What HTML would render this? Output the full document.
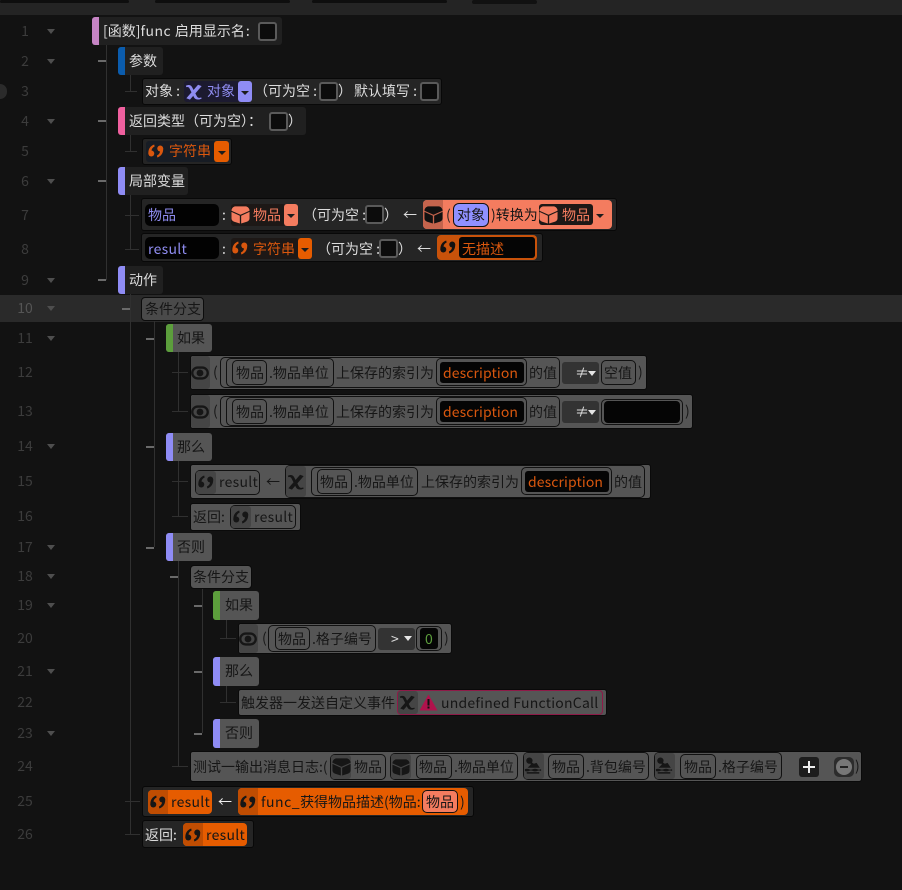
<!DOCTYPE html>
<html><head><meta charset="utf-8"><style>
html,body{margin:0;padding:0;background:#121212}
#p{position:relative;width:902px;height:890px;overflow:hidden;background:#121212;font-family:"Noto Sans CJK SC","Liberation Sans",sans-serif;font-size:14px;color:#dcdcdc}
.t{position:absolute;line-height:20px;white-space:nowrap}
.b{position:absolute;box-sizing:border-box;border-radius:3px}
.l{position:absolute;background:#303030}
.d{position:absolute;background:#6a6a6a;height:2px;width:8px}
.n{position:absolute;left:5px;width:40px;text-align:center;line-height:20px;color:#3c3c3c}
.a{position:absolute;left:47px;width:0;height:0;border-left:4px solid transparent;border-right:4px solid transparent;border-top:5px solid #4e4e4e}
.g{background:#555;border:1px solid #0a0a0a}
.k{background:#252525;border:1px solid #080808}
.o{border:1px solid #111;border-radius:5px}
.c{position:absolute;box-sizing:border-box;width:19px;height:19px;background:#0c0c0c;border:2px solid #5a5a5a;border-radius:3px}
.x{color:#161616}
.or{color:#d9570e}
.pu{color:#8f8cf0}
.co{color:#f47c5f}
.ls{letter-spacing:.3px}
.tr{position:absolute;width:0;height:0;border-left:4px solid transparent;border-right:4px solid transparent;border-top:4px solid #1c1c1c}
svg.i{position:absolute;width:18px;height:18px;fill:currentColor}
</style></head><body><div id="p">
<svg width="0" height="0" style="position:absolute"><defs>
<symbol id="q" viewBox="0 0 20 20"><circle cx="4.800" cy="12.800" r="3.300"/><path d="M1.500 12.800C1.400 8 3.300 4.500 8 2.800L8.500 5C6.300 6 5.200 7.800 5 9.500L2.500 14Z"/><circle cx="14.700" cy="7.200" r="3.300"/><path d="M18 7.200C18.100 12 16.200 15.500 11.500 17.200L11 15C13.200 14 14.300 12.200 14.500 10.500L17 6Z"/></symbol>
<symbol id="v" viewBox="0 0 20 20"><path d="M1 3C4 1.500 6.500 2 7.800 4.500L13 14.500C14 16.500 15.500 17 18 16L18.500 17.300C15 19 11.500 18.800 10 16L5 6C4.300 4.500 3 4.200 1.500 4.700Z"/><path d="M14.500 2L18.500 3.500L5.500 18.500L1.500 17Z"/></symbol>
<symbol id="u" viewBox="0 0 20 20"><path d="M4 1.500L16 1.500Q19.500 3 19.500 6L10 10.200L.5 6Q.5 3 4 1.500Z"/><path d="M.5 7.300L9.300 11.300L9.300 19.500L3 17.500Q.5 16.500 .5 14Z"/><path d="M19.500 7.300L10.700 11.300L10.700 19.500L17 17.500Q19.500 16.500 19.500 14Z"/></symbol>
<symbol id="e" viewBox="0 0 20 20"><rect x="1.400" y="4" width="17.200" height="12" rx="6" fill="none" stroke="currentColor" stroke-width="2.600"/><circle cx="10" cy="10" r="3.800"/></symbol>
<symbol id="h" viewBox="0 0 20 20"><circle cx="6" cy="4" r="3.500"/><path d="M7 5L11 7.500L14 6.500L17.500 12L4 12L7.500 8.500Z"/><path d="M1 13.500Q3.500 12.500 5.500 13.500T10 13.500T14.500 13.500T19 13.500L19 15.500Q16.500 14.500 14.500 15.500T10 15.500T5.500 15.500T1 15.500Z"/><path d="M3 16.800L17 16.800L17 18.500L3 18.500Z"/></symbol>
</defs></svg>

<!-- top bar -->
<div class="b" style="left:0;top:0;width:902px;height:15px;background:#242424;border-radius:0"></div>
<div class="b" style="left:0;top:0;width:129px;height:3px;background:#0e0e0e"></div>
<div class="b" style="left:155px;top:0;width:135px;height:3px;background:#0e0e0e"></div>
<div class="b" style="left:312px;top:0;width:135px;height:3px;background:#0e0e0e"></div>
<div class="b" style="left:472px;top:0;width:65px;height:4px;background:#111"></div>
<div class="b" style="left:0;top:295px;width:902px;height:27px;background:#2a2a2a;border-radius:0"></div>
<div class="b" style="left:-7px;top:84px;width:14px;height:15px;background:#2b2b2b;border-radius:8px"></div>

<!-- gutter -->
<div class="n" style="top:21px">1</div><div class="a" style="top:29px"></div>
<div class="n" style="top:51px">2</div><div class="a" style="top:59px"></div>
<div class="n" style="top:81px">3</div>
<div class="n" style="top:111px">4</div><div class="a" style="top:119px"></div>
<div class="n" style="top:141px">5</div>
<div class="n" style="top:171px">6</div><div class="a" style="top:179px"></div>
<div class="n" style="top:205px">7</div>
<div class="n" style="top:239px">8</div>
<div class="n" style="top:270px">9</div><div class="a" style="top:278px"></div>
<div class="n" style="top:298px;color:#555">10</div><div class="a" style="top:306px"></div>
<div class="n" style="top:328px">11</div><div class="a" style="top:336px"></div>
<div class="n" style="top:362px">12</div>
<div class="n" style="top:401px">13</div>
<div class="n" style="top:436px">14</div><div class="a" style="top:444px"></div>
<div class="n" style="top:471px">15</div>
<div class="n" style="top:506px">16</div>
<div class="n" style="top:537px">17</div><div class="a" style="top:545px"></div>
<div class="n" style="top:566px">18</div><div class="a" style="top:574px"></div>
<div class="n" style="top:595px">19</div><div class="a" style="top:603px"></div>
<div class="n" style="top:628px">20</div>
<div class="n" style="top:661px">21</div><div class="a" style="top:669px"></div>
<div class="n" style="top:692px">22</div>
<div class="n" style="top:723px">23</div><div class="a" style="top:731px"></div>
<div class="n" style="top:756px">24</div>
<div class="n" style="top:791px">25</div>
<div class="n" style="top:824px">26</div>

<!-- tree lines -->
<div class="l" style="left:106px;top:45px;width:1px;height:235px"></div>
<div class="l" style="left:130px;top:294px;width:1px;height:540px"></div>
<div class="l" style="left:154px;top:321px;width:1px;height:226px"></div>
<div class="l" style="left:178px;top:561px;width:1px;height:205px"></div>
<div class="l" style="left:202px;top:588px;width:1px;height:145px"></div>
<div class="l" style="left:130px;top:75px;width:1px;height:17px"></div>
<div class="l" style="left:125px;top:91px;width:12px;height:1px"></div>
<div class="l" style="left:130px;top:135px;width:1px;height:17px"></div>
<div class="l" style="left:125px;top:151px;width:12px;height:1px"></div>
<div class="l" style="left:130px;top:195px;width:1px;height:54px"></div>
<div class="l" style="left:125px;top:215px;width:14px;height:1px"></div>
<div class="l" style="left:125px;top:249px;width:14px;height:1px"></div>
<div class="l" style="left:178px;top:352px;width:1px;height:60px"></div>
<div class="l" style="left:172px;top:372px;width:16px;height:1px"></div>
<div class="l" style="left:172px;top:411px;width:16px;height:1px"></div>
<div class="l" style="left:178px;top:461px;width:1px;height:55px"></div>
<div class="l" style="left:172px;top:481px;width:16px;height:1px"></div>
<div class="l" style="left:172px;top:516px;width:16px;height:1px"></div>
<div class="l" style="left:226px;top:620px;width:1px;height:18px"></div>
<div class="l" style="left:220px;top:638px;width:16px;height:1px"></div>
<div class="l" style="left:226px;top:686px;width:1px;height:16px"></div>
<div class="l" style="left:220px;top:702px;width:16px;height:1px"></div>
<div class="l" style="left:172px;top:766px;width:16px;height:1px"></div>
<div class="l" style="left:125px;top:801px;width:15px;height:1px"></div>
<div class="l" style="left:125px;top:834px;width:15px;height:1px"></div>
<div class="d" style="left:98px;top:60px"></div>
<div class="d" style="left:98px;top:120px"></div>
<div class="d" style="left:98px;top:180px"></div>
<div class="d" style="left:98px;top:279px"></div>
<div class="d" style="left:122px;top:308px"></div>
<div class="d" style="left:146px;top:338px"></div>
<div class="d" style="left:146px;top:446px"></div>
<div class="d" style="left:146px;top:547px"></div>
<div class="d" style="left:170px;top:576px"></div>
<div class="d" style="left:194px;top:605px"></div>
<div class="d" style="left:194px;top:671px"></div>
<div class="d" style="left:194px;top:733px"></div>

<!-- row 1 -->
<div class="b" style="left:92px;top:17px;width:190px;height:28px;background:#202020"></div>
<div class="b" style="left:92px;top:17px;width:7px;height:28px;background:#c684c4;border-radius:3px 0 0 3px"></div>
<span class="t" style="left:103px;top:21px">[函数]<span style="letter-spacing:.5px">func </span>启用显示名<span style="margin-left:1px">:</span></span>
<div class="c" style="left:258px;top:22px"></div>

<!-- row 2 -->
<div class="b" style="left:118px;top:47px;width:45px;height:28px;background:#202020"></div>
<div class="b" style="left:118px;top:47px;width:7px;height:28px;background:#0b5cad;border-radius:3px 0 0 3px"></div>
<span class="t" style="left:129px;top:51px">参数</span>

<!-- row 3 -->
<div class="b k" style="left:142px;top:78px;width:300px;height:27px"></div>
<span class="t" style="left:145px;top:81px">对象 :</span>
<div class="b" style="left:184px;top:81px;width:56px;height:21px;background:#1c1a30"></div>
<svg class="i pu" style="left:185px;top:83px"><use href="#v"/></svg>
<span class="t pu" style="left:207px;top:81px">对象</span>
<div class="b" style="left:238px;top:81px;width:14px;height:21px;background:#8f8cf5"></div>
<div class="tr" style="left:241px;top:91px"></div>
<span class="t" style="left:254px;top:81px">（可为空 :</span>
<div class="c" style="left:319px;top:82px"></div>
<span class="t" style="left:338px;top:81px">）</span>
<span class="t" style="left:354px;top:81px">默认填写 :</span>
<div class="c" style="left:420px;top:82px"></div>

<!-- row 4 -->
<div class="b" style="left:118px;top:107px;width:188px;height:28px;background:#202020"></div>
<div class="b" style="left:118px;top:107px;width:7px;height:28px;background:#f0609f;border-radius:3px 0 0 3px"></div>
<span class="t" style="left:129px;top:111px">返回类型（可为空）：</span>
<div class="c" style="left:269px;top:112px"></div>
<span class="t" style="left:288px;top:111px">）</span>

<!-- row 5 -->
<div class="b k" style="left:142px;top:138px;width:90px;height:27px"></div>
<div class="b" style="left:146px;top:141px;width:70px;height:21px;background:#171c24"></div>
<svg class="i or" style="left:147px;top:142px"><use href="#q"/></svg>
<span class="t or" style="left:169px;top:141px">字符串</span>
<div class="b" style="left:214px;top:141px;width:15px;height:21px;background:#e65c00"></div>
<div class="tr" style="left:218px;top:151px"></div>

<!-- row 6 -->
<div class="b" style="left:118px;top:167px;width:70px;height:28px;background:#202020"></div>
<div class="b" style="left:118px;top:167px;width:7px;height:28px;background:#8f8cf5;border-radius:3px 0 0 3px"></div>
<span class="t" style="left:129px;top:171px">局部变量</span>

<!-- row 7 -->
<div class="b k" style="left:141px;top:198px;width:476px;height:33px"></div>
<div class="b" style="left:145px;top:204px;width:74px;height:22px;background:#020202;border-radius:5px"></div>
<span class="t pu" style="left:148px;top:205px">物品</span>
<span class="t" style="left:222px;top:205px">:</span>
<div class="b" style="left:231px;top:204px;width:55px;height:22px;background:#1d1816"></div>
<svg class="i co" style="left:231px;top:205px;width:19px;height:19px"><use href="#u"/></svg>
<span class="t co" style="left:253px;top:205px">物品</span>
<div class="b" style="left:284px;top:204px;width:14px;height:22px;background:#f47c5f"></div>
<div class="tr" style="left:287px;top:214px"></div>
<span class="t" style="left:303px;top:205px">（可为空 :</span>
<div class="c" style="left:365px;top:205px"></div>
<span class="t" style="left:384px;top:205px">）</span>
<span class="t" style="left:403px;top:205px">←</span>
<div class="b" style="left:423px;top:200px;width:189px;height:29px;background:#f47c5f;border-radius:4px"></div>
<div class="b" style="left:423px;top:200px;width:20px;height:29px;background:#c4644d;border-radius:4px 0 0 4px"></div>
<svg class="i" style="left:424px;top:205px;color:#111;width:19px;height:19px"><use href="#u"/></svg>
<span class="t" style="left:446px;top:205px;color:#222">(</span>
<div class="b o" style="left:453px;top:203px;width:36px;height:24px;background:#9090ff;border-radius:6px"></div>
<span class="t x" style="left:457px;top:205px">对象</span>
<span class="t x" style="left:491px;top:205px">)转换为</span>
<div class="b" style="left:539px;top:204px;width:54px;height:21px;background:#1d1816"></div>
<svg class="i co" style="left:539px;top:205px;width:19px;height:19px"><use href="#u"/></svg>
<span class="t co" style="left:562px;top:205px">物品</span>
<div class="tr" style="left:596px;top:214px"></div>

<!-- row 8 -->
<div class="b k" style="left:141px;top:233px;width:402px;height:29px"></div>
<div class="b" style="left:145px;top:237px;width:74px;height:22px;background:#020202;border-radius:5px"></div>
<span class="t pu ls" style="left:148px;top:239px">result</span>
<span class="t" style="left:222px;top:239px">:</span>
<div class="b" style="left:231px;top:238px;width:68px;height:21px;background:#1d1816"></div>
<svg class="i or" style="left:231px;top:239px"><use href="#q"/></svg>
<span class="t or" style="left:253px;top:239px">字符串</span>
<div class="b" style="left:298px;top:238px;width:14px;height:21px;background:#e65c00"></div>
<div class="tr" style="left:301px;top:248px"></div>
<span class="t" style="left:317px;top:239px">（可为空 :</span>
<div class="c" style="left:379px;top:239px"></div>
<span class="t" style="left:398px;top:239px">）</span>
<span class="t" style="left:417px;top:239px">←</span>
<div class="b" style="left:437px;top:235px;width:100px;height:25px;background:#c8520a;border-radius:4px"></div>
<div class="b" style="left:459px;top:237px;width:76px;height:21px;background:#050505"></div>
<svg class="i" style="left:439px;top:238px;color:#111"><use href="#q"/></svg>
<span class="t or" style="left:462px;top:239px">无描述</span>

<!-- row 9 -->
<div class="b" style="left:118px;top:266px;width:45px;height:28px;background:#202020"></div>
<div class="b" style="left:118px;top:266px;width:7px;height:28px;background:#8f8cf5;border-radius:3px 0 0 3px"></div>
<span class="t" style="left:129px;top:270px">动作</span>

<!-- row 10 -->
<div class="b" style="left:141px;top:297px;width:63px;height:24px;background:#4a4a4a;border:1px solid #0c0c0c;border-radius:4px"></div>
<span class="t" style="left:145px;top:299px;color:#161616">条件分支</span>

<!-- row 11 -->
<div class="b" style="left:166px;top:324px;width:46px;height:28px;background:#555"></div>
<div class="b" style="left:166px;top:324px;width:7px;height:28px;background:#5c9e3c;border-radius:3px 0 0 3px"></div>
<span class="t x" style="left:177px;top:328px">如果</span>

<!-- row 12 -->
<div class="b g" style="left:190px;top:355px;width:457px;height:35px"></div>
<div class="b" style="left:191px;top:356px;width:19px;height:33px;background:#454545"></div>
<svg class="i x" style="left:191px;top:364px"><use href="#e"/></svg>
<span class="t x" style="left:213px;top:362px">(</span>
<div class="b o" style="left:220px;top:357px;width:340px;height:31px"></div>
<div class="b o" style="left:226px;top:358px;width:108px;height:29px"></div>
<div class="b o" style="left:232px;top:360px;width:35px;height:25px"></div>
<span class="t x" style="left:236px;top:363px">物品</span>
<span class="t x" style="left:269px;top:363px">.物品单位</span>
<span class="t x" style="left:336px;top:363px">上保存的索引为</span>
<div class="b o" style="left:436px;top:358px;width:91px;height:28px"></div>
<div class="b" style="left:440px;top:362px;width:84px;height:21px;background:#050505;border-radius:3px"></div>
<span class="t or" style="left:443px;top:363px;letter-spacing:.1px">description</span>
<span class="t x" style="left:529px;top:363px">的值</span>
<div class="b" style="left:562px;top:362px;width:37px;height:22px;background:#333"></div>
<span class="t" style="left:575px;top:363px;color:#ddd">≠</span>
<div class="tr" style="left:588px;top:371px;border-top-color:#e5e5e5;border-top-width:5px"></div>
<div class="b o" style="left:601px;top:360px;width:35px;height:25px"></div>
<span class="t x" style="left:604px;top:363px">空值</span>
<span class="t x" style="left:638px;top:362px">)</span>

<!-- row 13 -->
<div class="b g" style="left:190px;top:394px;width:503px;height:35px"></div>
<div class="b" style="left:191px;top:395px;width:19px;height:33px;background:#454545"></div>
<svg class="i x" style="left:191px;top:403px"><use href="#e"/></svg>
<span class="t x" style="left:213px;top:401px">(</span>
<div class="b o" style="left:220px;top:396px;width:340px;height:31px"></div>
<div class="b o" style="left:226px;top:397px;width:108px;height:29px"></div>
<div class="b o" style="left:232px;top:399px;width:35px;height:25px"></div>
<span class="t x" style="left:236px;top:402px">物品</span>
<span class="t x" style="left:269px;top:402px">.物品单位</span>
<span class="t x" style="left:336px;top:402px">上保存的索引为</span>
<div class="b o" style="left:436px;top:397px;width:91px;height:28px"></div>
<div class="b" style="left:440px;top:401px;width:84px;height:21px;background:#050505;border-radius:3px"></div>
<span class="t or" style="left:443px;top:402px;letter-spacing:.1px">description</span>
<span class="t x" style="left:529px;top:402px">的值</span>
<div class="b" style="left:562px;top:401px;width:37px;height:22px;background:#333"></div>
<span class="t" style="left:575px;top:402px;color:#ddd">≠</span>
<div class="tr" style="left:588px;top:410px;border-top-color:#e5e5e5;border-top-width:5px"></div>
<div class="b o" style="left:601px;top:399px;width:82px;height:26px"></div>
<div class="b" style="left:604px;top:401px;width:76px;height:22px;background:#050505;border-radius:4px"></div>
<span class="t x" style="left:685px;top:401px">)</span>

<!-- row 14 -->
<div class="b" style="left:166px;top:433px;width:46px;height:28px;background:#555"></div>
<div class="b" style="left:166px;top:433px;width:7px;height:28px;background:#8f8cf5;border-radius:3px 0 0 3px"></div>
<span class="t x" style="left:177px;top:437px">那么</span>

<!-- row 15 -->
<div class="b g" style="left:190px;top:464px;width:461px;height:35px"></div>
<div class="b o" style="left:195px;top:470px;width:65px;height:25px"></div>
<div class="b" style="left:196px;top:471px;width:20px;height:23px;background:#454545"></div>
<svg class="i x" style="left:197px;top:473px"><use href="#q"/></svg>
<span class="t x ls" style="left:219px;top:472px">result</span>
<span class="t x" style="left:266px;top:472px">←</span>
<div class="b o" style="left:285px;top:465px;width:360px;height:33px"></div>
<div class="b" style="left:286px;top:466px;width:20px;height:31px;background:#454545"></div>
<svg class="i x" style="left:287px;top:473px"><use href="#v"/></svg>
<div class="b o" style="left:311px;top:467px;width:107px;height:29px"></div>
<div class="b o" style="left:317px;top:469px;width:35px;height:25px"></div>
<span class="t x" style="left:320px;top:472px">物品</span>
<span class="t x" style="left:354px;top:472px">.物品单位</span>
<span class="t x" style="left:421px;top:472px">上保存的索引为</span>
<div class="b o" style="left:521px;top:467px;width:91px;height:28px"></div>
<div class="b" style="left:525px;top:471px;width:84px;height:21px;background:#050505;border-radius:3px"></div>
<span class="t or" style="left:528px;top:472px;letter-spacing:.1px">description</span>
<span class="t x" style="left:614px;top:472px">的值</span>

<!-- row 16 -->
<div class="b g" style="left:190px;top:503px;width:111px;height:28px"></div>
<span class="t x" style="left:193px;top:507px">返回:</span>
<div class="b o" style="left:230px;top:505px;width:66px;height:24px"></div>
<div class="b" style="left:231px;top:506px;width:20px;height:22px;background:#454545"></div>
<svg class="i x" style="left:232px;top:508px"><use href="#q"/></svg>
<span class="t x ls" style="left:254px;top:507px">result</span>

<!-- row 17 -->
<div class="b" style="left:166px;top:533px;width:46px;height:28px;background:#555"></div>
<div class="b" style="left:166px;top:533px;width:7px;height:28px;background:#8f8cf5;border-radius:3px 0 0 3px"></div>
<span class="t x" style="left:177px;top:537px">否则</span>

<!-- row 18 -->
<div class="b g" style="left:190px;top:565px;width:62px;height:24px;border-radius:4px"></div>
<span class="t x" style="left:193px;top:567px">条件分支</span>

<!-- row 19 -->
<div class="b" style="left:213px;top:591px;width:46px;height:29px;background:#555"></div>
<div class="b" style="left:213px;top:591px;width:7px;height:29px;background:#5c9e3c;border-radius:3px 0 0 3px"></div>
<span class="t x" style="left:225px;top:595px">如果</span>

<!-- row 20 -->
<div class="b g" style="left:238px;top:623px;width:214px;height:31px"></div>
<div class="b" style="left:239px;top:624px;width:19px;height:29px;background:#454545"></div>
<svg class="i x" style="left:239px;top:630px"><use href="#e"/></svg>
<span class="t x" style="left:262px;top:628px">(</span>
<div class="b o" style="left:268px;top:625px;width:108px;height:27px"></div>
<div class="b o" style="left:275px;top:627px;width:35px;height:23px"></div>
<span class="t x" style="left:278px;top:629px">物品</span>
<span class="t x" style="left:312px;top:629px">.格子编号</span>
<div class="b" style="left:378px;top:628px;width:37px;height:22px;background:#333"></div>
<span class="t" style="left:391px;top:629px;color:#ddd">&gt;</span>
<div class="tr" style="left:404px;top:636px;border-top-color:#e5e5e5;border-top-width:5px"></div>
<div class="b o" style="left:416px;top:626px;width:26px;height:25px"></div>
<div class="b" style="left:420px;top:628px;width:18px;height:21px;background:#050505;border-radius:3px"></div>
<span class="t" style="left:425px;top:629px;color:#5c9e3c">0</span>
<span class="t x" style="left:444px;top:628px">)</span>

<!-- row 21 -->
<div class="b" style="left:213px;top:657px;width:46px;height:29px;background:#555"></div>
<div class="b" style="left:213px;top:657px;width:7px;height:29px;background:#8f8cf5;border-radius:3px 0 0 3px"></div>
<span class="t x" style="left:225px;top:661px">那么</span>

<!-- row 22 -->
<div class="b g" style="left:238px;top:689px;width:369px;height:27px"></div>
<span class="t x" style="left:241px;top:693px">触发器一发送自定义事件</span>
<div class="b" style="left:397px;top:690px;width:206px;height:25px;border:1px solid #8f1a48;border-radius:4px"></div>
<div class="b" style="left:398px;top:691px;width:20px;height:23px;background:#454545"></div>
<svg class="i x" style="left:399px;top:694px;width:17px;height:17px"><use href="#v"/></svg>
<svg style="position:absolute;left:419px;top:694px" width="19" height="17" viewBox="0 0 19 17"><path d="M9.500 0.500L18.500 16.500L0.500 16.500Z" fill="#b0124c"/><rect x="8.500" y="5" width="2" height="6.500" fill="#111"/><rect x="8.500" y="12.500" width="2" height="2" fill="#111"/></svg>
<span class="t x" style="left:441px;top:693px;letter-spacing:.23px">undefined FunctionCall</span>

<!-- row 23 -->
<div class="b" style="left:213px;top:719px;width:46px;height:29px;background:#555"></div>
<div class="b" style="left:213px;top:719px;width:7px;height:29px;background:#8f8cf5;border-radius:3px 0 0 3px"></div>
<span class="t x" style="left:225px;top:723px">否则</span>

<!-- row 24 -->
<div class="b g" style="left:190px;top:751px;width:672px;height:31px"></div>
<span class="t x" style="left:193px;top:757px">测试一输出消息日志:(</span>
<div class="b o" style="left:330px;top:754px;width:56px;height:26px"></div>
<div class="b" style="left:331px;top:755px;width:20px;height:24px;background:#454545"></div>
<svg class="i x" style="left:332px;top:757px;width:19px;height:19px"><use href="#u"/></svg>
<span class="t x" style="left:354px;top:757px">物品</span>
<div class="b o" style="left:390px;top:753px;width:128px;height:27px"></div>
<div class="b" style="left:391px;top:754px;width:20px;height:25px;background:#454545"></div>
<svg class="i x" style="left:392px;top:758px"><use href="#u"/></svg>
<div class="b o" style="left:416px;top:755px;width:36px;height:24px"></div>
<span class="t x" style="left:419px;top:757px">物品</span>
<span class="t x" style="left:454px;top:757px">.物品单位</span>
<div class="b o" style="left:523px;top:752px;width:126px;height:28px"></div>
<div class="b" style="left:524px;top:753px;width:20px;height:26px;background:#454545"></div>
<svg class="i x" style="left:524px;top:757px"><use href="#h"/></svg>
<div class="b o" style="left:548px;top:754px;width:36px;height:25px"></div>
<span class="t x" style="left:552px;top:757px">物品</span>
<span class="t x" style="left:586px;top:757px">.背包编号</span>
<div class="b o" style="left:654px;top:752px;width:128px;height:28px"></div>
<div class="b" style="left:655px;top:753px;width:20px;height:26px;background:#454545"></div>
<svg class="i x" style="left:655px;top:757px"><use href="#h"/></svg>
<div class="b o" style="left:680px;top:754px;width:36px;height:25px"></div>
<span class="t x" style="left:684px;top:757px">物品</span>
<span class="t x" style="left:718px;top:757px">.格子编号</span>
<div class="b" style="left:799px;top:757px;width:20px;height:20px;background:#1d1d1d"></div>
<div class="b" style="left:803px;top:766px;width:12px;height:2px;background:#eee;border-radius:0"></div>
<div class="b" style="left:808px;top:761px;width:2px;height:12px;background:#eee;border-radius:0"></div>
<div class="b" style="left:834px;top:757px;width:20px;height:20px;background:#2c2c2c;border-radius:5px"></div>
<div class="b" style="left:836px;top:759px;width:16px;height:16px;background:#777;border-radius:8px"></div>
<div class="b" style="left:840px;top:766px;width:8px;height:2px;background:#222;border-radius:0"></div>
<span class="t x" style="left:855px;top:756px">)</span>

<!-- row 25 -->
<div class="b k" style="left:142px;top:786px;width:332px;height:31px"></div>
<div class="b" style="left:148px;top:790px;width:64px;height:24px;background:#e65c00;border-radius:4px"></div>
<div class="b" style="left:148px;top:790px;width:20px;height:24px;background:#c04d02;border-radius:4px 0 0 4px"></div>
<svg class="i x" style="left:149px;top:793px"><use href="#q"/></svg>
<span class="t x ls" style="left:171px;top:792px">result</span>
<span class="t" style="left:218px;top:792px;color:#eee">←</span>
<div class="b" style="left:238px;top:788px;width:230px;height:27px;background:#e65c00;border-radius:4px"></div>
<div class="b" style="left:238px;top:788px;width:20px;height:27px;background:#c04d02;border-radius:4px 0 0 4px"></div>
<svg class="i x" style="left:239px;top:793px"><use href="#q"/></svg>
<span class="t x" style="left:261px;top:792px"><span style="letter-spacing:.5px">func_</span>获得物品描述(物品:</span>
<div class="b o" style="left:422px;top:790px;width:36px;height:23px;background:#f47c5f;border-radius:5px"></div>
<span class="t x" style="left:426px;top:792px">物品</span>
<span class="t x" style="left:460px;top:792px">)</span>

<!-- row 26 -->
<div class="b k" style="left:142px;top:820px;width:112px;height:28px"></div>
<span class="t" style="left:145px;top:825px">返回:</span>
<div class="b" style="left:183px;top:823px;width:64px;height:23px;background:#e65c00;border-radius:4px"></div>
<div class="b" style="left:183px;top:823px;width:20px;height:23px;background:#c04d02;border-radius:4px 0 0 4px"></div>
<svg class="i x" style="left:184px;top:826px"><use href="#q"/></svg>
<span class="t x ls" style="left:206px;top:825px">result</span>
</div></body></html>
